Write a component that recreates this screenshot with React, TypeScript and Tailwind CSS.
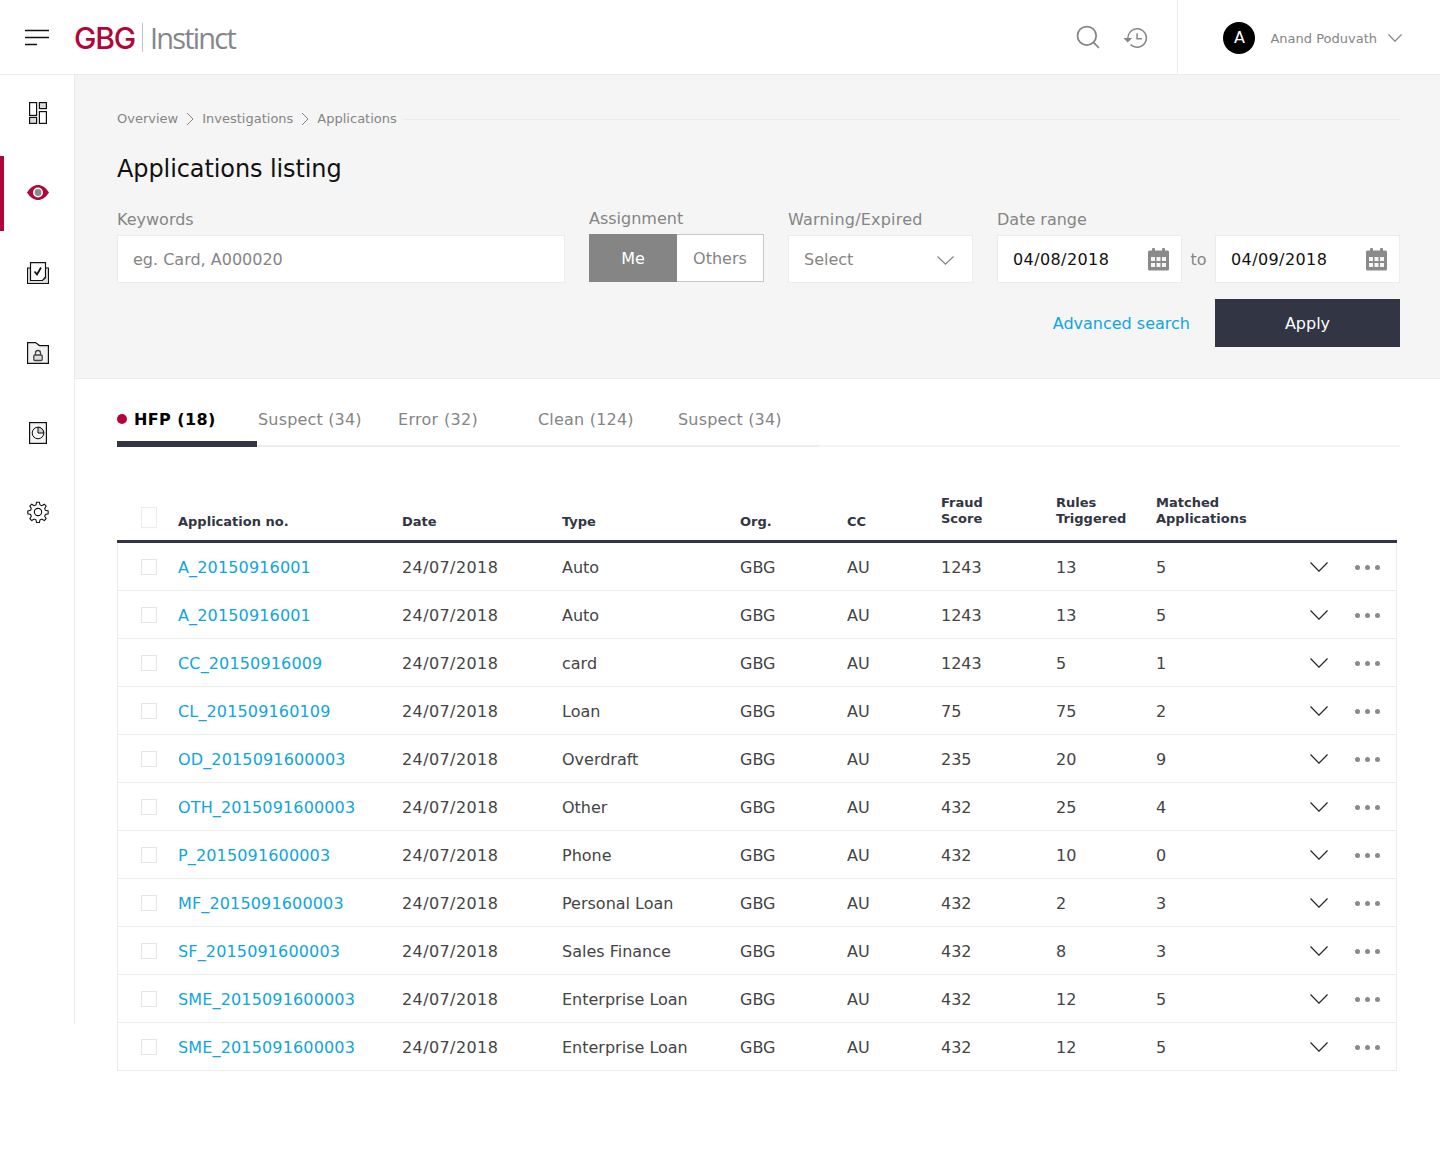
import { Search } from "lucide-react";

const font = "font-['DejaVu_Sans',sans-serif]";
const gridCols = "grid grid-cols-[61px_224px_160px_178px_107px_94px_115px_100px_1fr]";
const cell = "-ml-px pt-[2px]";

const rows = [
  ["A_20150916001", "Auto", "1243", "13", "5"],
  ["A_20150916001", "Auto", "1243", "13", "5"],
  ["CC_20150916009", "card", "1243", "5", "1"],
  ["CL_201509160109", "Loan", "75", "75", "2"],
  ["OD_2015091600003", "Overdraft", "235", "20", "9"],
  ["OTH_2015091600003", "Other", "432", "25", "4"],
  ["P_2015091600003", "Phone", "432", "10", "0"],
  ["MF_2015091600003", "Personal Loan", "432", "2", "3"],
  ["SF_2015091600003", "Sales Finance", "432", "8", "3"],
  ["SME_2015091600003", "Enterprise Loan", "432", "12", "5"],
  ["SME_2015091600003", "Enterprise Loan", "432", "12", "5"],
];

const tabs = [
  { label: "Suspect (34)", width: "w-[141px]", spacing: "tracking-[0.17px]" },
  { label: "Error (32)", width: "w-[140px]", spacing: "tracking-[0.3px]" },
  { label: "Clean (124)", width: "w-[140px]", spacing: "tracking-[0.2px]" },
  { label: "Suspect (34)", width: "w-[141px]", spacing: "tracking-[0.17px]" },
];

const Chevron = ({ w, h, color }: { w: number; h: number; color: string }) => (
  <svg width={w} height={h} viewBox={`0 0 ${w} ${h}`} fill="none" stroke={color} strokeWidth="1.200">
    <path d={`M0.500 0.500L${w / 2} ${h - 0.800}L${w - 0.500} 0.500`} />
  </svg>
);

const Crumb = () => (
  <svg width="8" height="14" viewBox="0 0 8 14" fill="none" stroke="#858585" strokeWidth="1" className="mx-[8px]">
    <path d="M1 1l6 6-6 6" />
  </svg>
);

const Calendar = () => (
  <svg width="21" height="23" viewBox="0 0 21 23" fill="#8a8a8a">
    <rect x="4" y="0" width="3" height="5" rx="1" />
    <rect x="14" y="0" width="3" height="5" rx="1" />
    <path d="M1.500 2.500h18a1.500 1.500 0 0 1 1.500 1.500v17a1.500 1.500 0 0 1-1.500 1.500h-18a1.500 1.500 0 0 1-1.500-1.500v-17a1.500 1.500 0 0 1 1.500-1.500z" />
    <g fill="#f5f5f5">
      <rect x="3" y="9" width="4" height="4" />
      <rect x="8.500" y="9" width="4" height="4" />
      <rect x="14" y="9" width="4" height="4" />
      <rect x="3" y="15" width="4" height="4" />
      <rect x="8.500" y="15" width="4" height="4" />
      <rect x="14" y="15" width="4" height="4" />
    </g>
  </svg>
);

const Sidebar = () => (
  <aside className="w-[75px] h-[949px] shrink-0 border-r border-[#ececec] bg-white flex flex-col">
    <div className="h-[76px] pl-[2px] flex items-center justify-center">
      <svg width="18" height="22" viewBox="0 0 18 22" fill="none" stroke="#111" strokeWidth="1.200">
        <rect x="0.600" y="0.600" width="7" height="12.800" />
        <rect x="10.400" y="0.600" width="7" height="6" fill="#ddd" />
        <rect x="0.600" y="15.400" width="7" height="6" fill="#ddd" />
        <rect x="10.400" y="9.600" width="7" height="11.800" />
      </svg>
    </div>
    <div className="h-[75px] mt-[5px] pl-[2px] pb-[2px] flex items-center justify-center relative">
      <div className="absolute left-0 top-0 w-1 h-full bg-[#b0063a]" />
      <svg width="22" height="15" viewBox="0 0 22 15">
        <path d="M0 7.500C3.500 2.200 7.200 0 11 0S18.500 2.200 22 7.500C18.500 12.800 14.800 15 11 15S3.500 12.800 0 7.500z" fill="#b0063a" />
        <circle cx="11" cy="7.500" r="5" fill="#fff" />
        <circle cx="11" cy="7.500" r="3.400" fill="#8a8a8c" />
      </svg>
    </div>
    <div className="h-[80px] mt-[2px] pl-[2px] flex items-center justify-center">
      <svg width="22" height="22" viewBox="0 0 22 22" fill="none" stroke="#111" strokeWidth="1.200">
        <path d="M3.500 6H0.600V21.400H21.400V6H18.500V17H3.500z" fill="#fff" />
        <path d="M1.200 16.500H3.500L6 19H16L18.500 16.500H20.800V20.800H1.200z" fill="#ddd" strokeWidth="0" />
        <path d="M3.500 0.600H18.500V15L15.500 18.500H3.500z" fill="#fff" />
        <path d="M7.500 9.500l2.500 3 4-7" strokeWidth="1.800" />
      </svg>
    </div>
    <div className="h-[80px] pl-[2px] flex items-center justify-center">
      <svg width="22" height="22" viewBox="0 0 22 22" fill="#f2f2f2" stroke="#111" strokeWidth="1.200">
        <path d="M0.600 0.600H8.500L12.500 3.600H21.400V21.400H0.600z" />
        <path d="M8.500 13v-2a2.500 2.500 0 0 1 5 0v2" fill="none" stroke="#444" strokeWidth="1.300" />
        <rect x="6.800" y="13" width="8.400" height="5.500" rx="1" fill="#ddd" stroke="#444" strokeWidth="1.300" />
      </svg>
    </div>
    <div className="h-[80px] pl-[2px] flex items-center justify-center">
      <svg width="18" height="22" viewBox="0 0 18 22" fill="#f5f5f5" stroke="#111" strokeWidth="1.200">
        <rect x="0.600" y="0.600" width="16.800" height="20.800" />
        <circle cx="9" cy="11" r="5.800" fill="none" strokeWidth="1" />
        <path d="M9 5.200V11h5.800A5.800 5.800 0 0 0 9 5.200z" fill="#cfcfcf" strokeWidth="1" />
      </svg>
    </div>
    <div className="h-[80px] pl-[2px] pb-[2px] flex items-center justify-center">
      <svg width="22" height="22" viewBox="0 0 24 24" fill="none" stroke="#111" strokeWidth="1.200">
        <path d="M12 23.500h-1.500l-.700-3-2-.800-2.600 1.600-2.100-2.100 1.600-2.600-.800-2-3-.700v-3l3-.700.800-2-1.600-2.600 2.100-2.100 2.600 1.600 2-.800.700-3h3l.700 3 2 .800 2.600-1.600 2.100 2.100-1.600 2.600.800 2 3 .700v3l-3 .700-.800 2 1.600 2.600-2.100 2.100-2.600-1.600-2 .800-.700 3z" />
        <circle cx="12" cy="12" r="4" />
      </svg>
    </div>
  </aside>
);

const Header = () => (
  <header className="h-[75px] border-b border-[#ececec] bg-white flex items-center">
    <div className="w-[75px] pr-px pt-px flex justify-center">
      <svg width="24" height="17" viewBox="0 0 24 17" stroke="#111" strokeWidth="1.500">
        <path d="M0 1.500h24M0 8.500h24M0 15.500h12" />
      </svg>
    </div>
    <div className="flex items-center pt-px">
      <span className="font-['Inter',sans-serif] font-medium text-[30px] tracking-[-1.200px] -ml-px text-[#b0063a] leading-none">GBG</span>
      <span className="w-px h-[29px] bg-[#c4c4c4] ml-[7px] mr-[7px]" />
      <span className="font-['Open_Sans',sans-serif] text-[29px] tracking-[-1.800px] text-[#85868a] leading-none">Instinct</span>
    </div>
    <div className="ml-auto flex items-center h-full">
      <Search size={28} strokeWidth={1.500} className="text-[#858585] mr-[20px]" />
      <svg width="28" height="28" viewBox="0 0 24 24" fill="#858585" className="mr-[27px] mt-px">
        <path d="M13 3.400a8.600 8.600 0 0 0-8.600 8.600H1.200l3.700 3.900L8.700 12H5.700c0-4 3.300-7.200 7.300-7.200s7.200 3.200 7.200 7.200-3.200 7.200-7.200 7.200c-2 0-3.800-.8-5.100-2.100l-1 1a8.600 8.600 0 1 0 6.100-14.700z" />
        <path d="M12.300 8v5.300h4.700v-1.300h-3.400V8z" />
      </svg>
      <div className="border-l border-[#ececec] h-full flex items-center pl-[45px] pr-[38px] pt-[2px]">
        <span className="w-8 h-8 rounded-full bg-black text-white text-[16px] flex items-center justify-center">A</span>
        <span className="ml-[15px] pt-[2px] text-[13px] text-[#858585]">Anand Poduvath</span>
        <span className="ml-[11px]">
          <Chevron w={14} h={8} color="#858585" />
        </span>
      </div>
    </div>
  </header>
);

const Filters = () => (
  <section className="h-[304px] bg-[#f5f5f5] border-b border-[#ececec] pl-[42px] pr-10 pt-[36px]">
    <div className="flex items-center text-[13px] text-[#858585] h-4">
      <span>Overview</span>
      <Crumb />
      <span>Investigations</span>
      <Crumb />
      <span>Applications</span>
      <div className="flex-1 h-px bg-[#ececec] ml-[6px]" />
    </div>
    <h1 className="mt-[26px] text-[24px] leading-[32px] tracking-[-0.1px] text-[#111]">Applications listing</h1>
    <div className="mt-[24px] flex">
      <div className="w-[448px] mr-[24px]">
        <div className="text-[16px] leading-[20px] text-[#858585] h-[26px] pt-px">Keywords</div>
        <div className="h-[48px] bg-white border border-[#ececec] flex items-center pl-[15px] pt-[2px] text-[16px] text-[#858585]">eg. Card, A000020</div>
      </div>
      <div className="w-[175px] mr-[24px]">
        <div className="text-[16px] leading-[20px] text-[#858585] h-[25px]">Assignment</div>
        <div className="h-[48px] flex border border-[#c8c8c8] bg-white text-[16px]">
          <div className="w-[88px] -ml-px -my-px pt-[2px] bg-[#858585] text-white flex items-center justify-center">Me</div>
          <div className="flex-1 pt-[2px] text-[#858585] flex items-center justify-center">Others</div>
        </div>
      </div>
      <div className="w-[185px] mr-[24px]">
        <div className="text-[16px] leading-[20px] tracking-[0.2px] text-[#858585] h-[26px] pt-px">Warning/Expired</div>
        <div className="h-[48px] bg-white border border-[#ececec] flex items-center justify-between pl-[15px] pr-[18px] pt-[2px] text-[16px] text-[#858585]">
          Select
          <Chevron w={17} h={9} color="#858585" />
        </div>
      </div>
      <div className="w-[403px]">
        <div className="text-[16px] leading-[20px] text-[#858585] h-[26px] pt-px">Date range</div>
        <div className="flex items-center">
          <div className="w-[185px] h-[48px] bg-white border border-[#ececec] flex items-center justify-between pl-[15px] pr-[12px] text-[16px] tracking-[0.4px] text-[#111]">
            <span className="pt-[2px]">04/08/2018</span>
            <Calendar />
          </div>
          <span className="w-[33px] pt-[2px] text-center text-[16px] text-[#858585]">to</span>
          <div className="w-[185px] h-[48px] bg-white border border-[#ececec] flex items-center justify-between pl-[15px] pr-[12px] text-[16px] tracking-[0.4px] text-[#111]">
            <span className="pt-[2px]">04/09/2018</span>
            <Calendar />
          </div>
        </div>
      </div>
    </div>
    <div className="mt-[16px] flex items-center justify-end">
      <span className="pt-[2px] text-[16px] text-[#0ea5e0] mr-[25px]">Advanced search</span>
      <div className="w-[185px] h-[48px] pt-[2px] bg-[#323543] text-white text-[16px] flex items-center justify-center">Apply</div>
    </div>
  </section>
);

const Tabs = () => (
  <div className="mt-[25px] flex h-[43px] border-b-2 border-[#f5f5f5]">
    <div className="w-[140px] h-[43px] -mb-[2px] border-b-[6px] border-[#323543] flex items-start pt-[4px] shrink-0">
      <span className="w-[10px] h-[10px] rounded-full bg-[#b0063a] mr-[7px] mt-[6px]" />
      <span className="text-[16px] leading-[23px] font-bold text-black tracking-[0.4px]">HFP (18)</span>
    </div>
    {tabs.map((tab, i) => (
      <div key={i} className={`${tab.width} ${tab.spacing} h-[43px] -mb-[2px] border-b-2 border-[#ececec] pt-[4px] ${i === 0 ? "pl-px" : ""} text-[16px] text-[#858585]`}>
        {tab.label}
      </div>
    ))}
  </div>
);

const Table = () => (
  <div className="mt-[44px] mr-[3px]">
    <div className={`${gridCols} h-[52px] items-end border-b-[3px] border-[#323543] pb-[10px] text-[13px] leading-[16px] font-bold text-[#323543]`}>
      <div className="pl-[24px] self-start mt-[16px]">
        <div className="w-4 h-[21px] border border-[#ececec]" />
      </div>
      <div>Application no.</div>
      <div>Date</div>
      <div>Type</div>
      <div>Org.</div>
      <div>CC</div>
      <div className="pb-[3px]">Fraud<br />Score</div>
      <div className="pb-[3px]">Rules<br />Triggered</div>
      <div className="pb-[3px] whitespace-nowrap">Matched<br />Applications</div>
    </div>
    {rows.map((row, i) => (
      <div key={i} className={`${gridCols} h-[48px] items-center border-b border-x border-[#ececec] text-[16px] text-[#444]`}>
        <div className="pl-[23px]">
          <div className="w-4 h-4 border border-[#e4e4e4]" />
        </div>
        <div className={`${cell} text-[#0ea5e0] tracking-[0.15px]`}>{row[0]}</div>
        <div className={`${cell} tracking-[0.4px]`}>24/07/2018</div>
        <div className={cell}>{row[1]}</div>
        <div className={cell}>GBG</div>
        <div className={cell}>AU</div>
        <div className={cell}>{row[2]}</div>
        <div className={cell}>{row[3]}</div>
        <div className={`${cell} flex items-center justify-between pr-[16px]`}>
          {row[4]}
          <div className="flex items-center">
            <span className="-mt-[2px]">
              <Chevron w={18} h={10} color="#222" />
            </span>
            <div className="ml-[27px] flex gap-[5px]">
              <span className="w-[5px] h-[5px] rounded-full bg-[#8a8a8a]" />
              <span className="w-[5px] h-[5px] rounded-full bg-[#8a8a8a]" />
              <span className="w-[5px] h-[5px] rounded-full bg-[#8a8a8a]" />
            </div>
          </div>
        </div>
      </div>
    ))}
  </div>
);

export default function App() {
  return (
    <div className={`${font} w-[1440px] h-[1152px] bg-white overflow-hidden`}>
      <Header />
      <div className="flex">
        <Sidebar />
        <main className="flex-1 min-w-0">
          <Filters />
          <div className="pl-[42px] pr-10">
            <Tabs />
            <Table />
          </div>
        </main>
      </div>
    </div>
  );
}
